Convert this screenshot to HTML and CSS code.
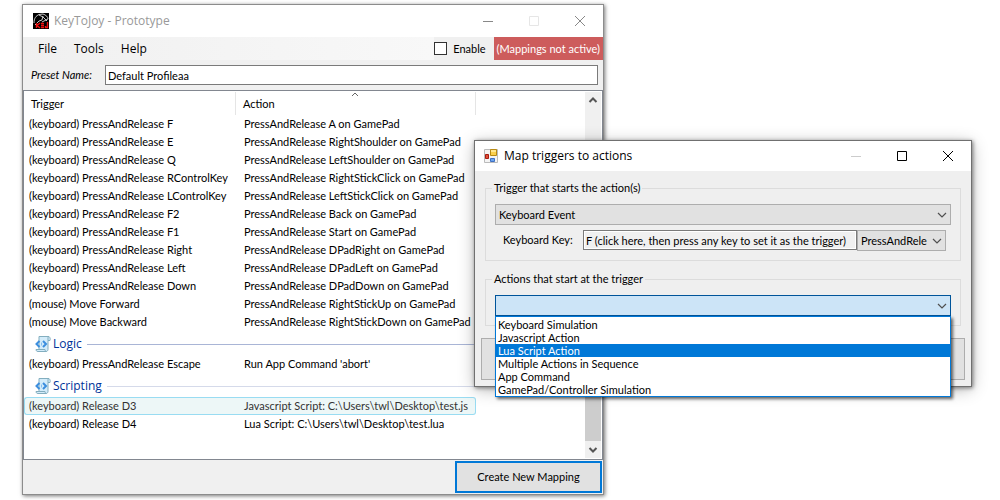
FILE: index.html
```html
<!DOCTYPE html>
<html lang="en">
<head>
<meta charset="utf-8">
<title>KeyToJoy - Prototype</title>
<link rel="stylesheet" href="styles.css">
</head>
<body>
<svg class="defs" width="0" height="0" aria-hidden="true">
  <symbol id="script" viewBox="0 0 16 16">
    <path d="M4 .5h10c1.200 1 1.500 2.500 1 4h-2v9c0 1-.8 2-2 2H3c-1.500 0-2-1-2-2h3z" fill="#d3ecfa" stroke="#83aebf"/>
    <path d="M13 4.500V2c0-1 .5-1.500 1-1.500M2 13.500h8c0 1 .5 2 1.500 2" fill="none" stroke="#83aebf"/>
    <path d="M4.500 5 1.500 8l3 3M8 5l3 3-3 3" fill="none" stroke="#3c8ede" stroke-width="2"/>
    <path d="M6 6.500h1v3H6z" fill="#83bdf0"/>
  </symbol>
  <symbol id="chevron" viewBox="0 0 10 6"><path d="m1 1 4 4 4-4" fill="none" stroke="#505050" stroke-width="1.200"/></symbol>
</svg>

<main class="window main-window">
  <header class="titlebar">
    <svg class="app-icon" viewBox="0 0 16 16" aria-hidden="true">
      <path d="M0 0h16v16H0z" fill="#000"/>
      <path d="M1 10c0-5 2-7 5-8.500l4-.5c3 1 5 3 5 5L9 9M2 12l4-4 3-1 1-4M6 2l4 2 4 4" fill="none" stroke="#ddd" stroke-width=".9"/>
      <path d="M3.500 10v5M7 10l-3 2.500L7 15M8 10.500h3M8 12.500h3M8 14.500h3M14.500 9v5.500h-2V13" fill="none" stroke="#f01010" stroke-width="1.400"/>
    </svg>
    <span class="title muted">KeyToJoy - Prototype</span>
    <div class="captions">
      <button aria-label="Minimize"><svg viewBox="0 0 12 12"><path d="M1 6.500h10" stroke="#888"/></svg></button>
      <button aria-label="Maximize"><svg viewBox="0 0 12 12"><path d="M1.500 1.500h9v9h-9z" fill="none" stroke="#e6e6e6"/></svg></button>
      <button aria-label="Close"><svg viewBox="0 0 12 12"><path d="m1 1 10 10M11 1 1 11" stroke="#888"/></svg></button>
    </div>
  </header>
  <div class="menubar">
    <nav class="menus"><button>File</button><button>Tools</button><button>Help</button></nav>
    <label class="enable"><input type="checkbox"> Enable</label>
    <span class="status">(Mappings not active)</span>
  </div>
  <div class="preset">
    <label for="preset">Preset Name:</label>
    <input id="preset" type="text" value="Default Profileaa">
  </div>
  <section class="list">
    <table class="mappings">
      <colgroup><col class="col-trigger"><col class="col-action"></colgroup>
      <thead><tr><th>Trigger</th><th>Action<svg class="sort" viewBox="0 0 8 5" aria-hidden="true"><path d="m1 4 3-3 3 3" fill="none" stroke="#666"/></svg></th></tr></thead>
      <tbody>
        <tr><td>(keyboard) PressAndRelease F</td><td>PressAndRelease A on GamePad</td></tr>
        <tr><td>(keyboard) PressAndRelease E</td><td>PressAndRelease RightShoulder on GamePad</td></tr>
        <tr><td>(keyboard) PressAndRelease Q</td><td>PressAndRelease LeftShoulder on GamePad</td></tr>
        <tr><td>(keyboard) PressAndRelease RControlKey</td><td>PressAndRelease RightStickClick on GamePad</td></tr>
        <tr><td>(keyboard) PressAndRelease LControlKey</td><td>PressAndRelease LeftStickClick on GamePad</td></tr>
        <tr><td>(keyboard) PressAndRelease F2</td><td>PressAndRelease Back on GamePad</td></tr>
        <tr><td>(keyboard) PressAndRelease F1</td><td>PressAndRelease Start on GamePad</td></tr>
        <tr><td>(keyboard) PressAndRelease Right</td><td>PressAndRelease DPadRight on GamePad</td></tr>
        <tr><td>(keyboard) PressAndRelease Left</td><td>PressAndRelease DPadLeft on GamePad</td></tr>
        <tr><td>(keyboard) PressAndRelease Down</td><td>PressAndRelease DPadDown on GamePad</td></tr>
        <tr><td>(mouse) Move Forward</td><td>PressAndRelease RightStickUp on GamePad</td></tr>
        <tr><td>(mouse) Move Backward</td><td>PressAndRelease RightStickDown on GamePad</td></tr>
        <tr class="group"><th colspan="2"><div class="group-head strong"><svg><use href="#script"/></svg>Logic</div></th></tr>
        <tr><td>(keyboard) PressAndRelease Escape</td><td>Run App Command 'abort'</td></tr>
        <tr class="group"><th colspan="2"><div class="group-head"><svg><use href="#script"/></svg>Scripting</div></th></tr>
        <tr class="selected"><td>(keyboard) Release D3</td><td>Javascript Script: C:\Users\twl\Desktop\test.js</td></tr>
        <tr><td>(keyboard) Release D4</td><td>Lua Script: C:\Users\twl\Desktop\test.lua</td></tr>
      </tbody>
    </table>
    <div class="scrollbar" aria-hidden="true">
      <svg viewBox="0 0 10 8"><path d="m1.500 6 3.500-3.500L8.500 6" fill="none" stroke="#555" stroke-width="2"/></svg>
      <div class="thumb"></div>
      <svg viewBox="0 0 10 8"><path d="M1.500 2 5 5.500 8.500 2" fill="none" stroke="#555" stroke-width="2"/></svg>
    </div>
  </section>
  <footer class="footer"><button class="create">Create New Mapping</button></footer>
</main>

<section class="window dialog" role="dialog" aria-label="Map triggers to actions">
  <header class="titlebar">
    <svg class="form-icon" viewBox="0 0 14 14" aria-hidden="true">
      <path d="M.5.5h13v13H.5z" fill="#f4f4f4" stroke="#bbb"/>
      <path d="M6.500.5h6v6h-6z" fill="#fbd04c" stroke="#b88a13"/>
      <path d="M7 1h5v2H7z" fill="#ffe791"/>
      <path d="M1.500 5.500h3v4h-3z" fill="#e0503a" stroke="#a81c10"/>
      <path d="M6.500 9.500h4v3h-4z" fill="#6ba4ee" stroke="#3f71c4"/>
    </svg>
    <span class="title">Map triggers to actions</span>
    <div class="captions">
      <button aria-label="Minimize"><svg viewBox="0 0 12 12"><path d="M1 6.500h10" stroke="#ccc"/></svg></button>
      <button aria-label="Maximize"><svg viewBox="0 0 12 12"><path d="M1.500 1.500h9v9h-9z" fill="none" stroke="#000"/></svg></button>
      <button aria-label="Close"><svg viewBox="0 0 12 12"><path d="m1 1 10 10M11 1 1 11" stroke="#000"/></svg></button>
    </div>
  </header>
  <div class="dialog-body">
    <fieldset>
      <legend>Trigger that starts the action(s)</legend>
      <div class="combo"><select aria-label="Trigger"><option>Keyboard Event</option></select><svg><use href="#chevron"/></svg></div>
      <div class="key-row">
        <label for="key">Keyboard Key:</label>
        <input id="key" type="text" readonly value="F (click here, then press any key to set it as the trigger)">
        <div class="combo press"><select aria-label="Press type"><option>PressAndRelease</option></select><svg><use href="#chevron"/></svg></div>
      </div>
    </fieldset>
    <fieldset>
      <legend>Actions that start at the trigger</legend>
      <div class="combo open"><select aria-label="Action"><option></option></select><svg><use href="#chevron"/></svg>
        <ul class="popup" role="listbox">
          <li role="option">Keyboard Simulation</li>
          <li role="option">Javascript Action</li>
          <li role="option" class="active" aria-selected="true">Lua Script Action</li>
          <li role="option">Multiple Actions in Sequence</li>
          <li role="option">App Command</li>
          <li role="option">GamePad/Controller Simulation</li>
        </ul>
      </div>
    </fieldset>
    <button class="save" aria-label="Save"></button>
  </div>
</section>
</body>
</html>
```
FILE: styles.css
```css
* { box-sizing: border-box; }
body { margin: 0; min-height: 100vh; background: #fff; color: #000; font: 11px/14px Lato, "Liberation Sans", sans-serif; overflow: hidden; }
button, input, select { font: inherit; color: inherit; margin: 0; padding: 0; border: 0; border-radius: 0; background: none; }
svg { display: block; flex: none; }
.defs { position: absolute; }

.window { position: absolute; background: #f0f0f0; }
.main-window { left: 23px; top: 5px; width: 58vw; box-shadow: 0 0 0 1px #8c8c8c, 1px 1px 4px 1px #777; }
.dialog { left: 475px; top: 141px; width: 49.6vw; background: #efefef; box-shadow: 0 0 0 1px #707070, 1px 1px 4px 1px #777, 0 3px 16px rgba(0, 0, 0, .3); }

.titlebar { display: flex; align-items: center; height: 32px; padding-left: 10px; background: #fff; }
.dialog .titlebar { height: 30px; padding-left: 9px; }
.app-icon { width: 16px; height: 16px; }
.form-icon { width: 14px; height: 14px; }
.title { flex: 1; padding-left: 5px; font: 12px/16px "Open Sans", sans-serif; }
.dialog .title { padding-left: 6px; }
.muted { color: #999; }
.captions { display: flex; }
.captions button { display: grid; place-items: center; width: 46px; height: 30px; }
.captions svg { width: 12px; height: 12px; }

.menubar { display: flex; height: 23px; }
.menus { flex: 1; display: flex; gap: 17px; padding-left: 15px; background: linear-gradient(90deg, #f0f0f0, #f8f8f8); font: 12px/23px "Open Sans", sans-serif; }
.enable { display: flex; align-items: center; gap: 6px; padding-right: 8px; }
.enable input { appearance: none; width: 13px; height: 13px; border: 1px solid #333; background: #fff; }
.status { min-width: 109px; padding: 0 3px; background: #cd5c5c; color: #fff; line-height: 24px; }

.preset { display: flex; align-items: center; height: 30px; padding: 0 5px 0 8px; }
.preset label { width: 74px; font-style: italic; }
.preset input { flex: 1; height: 20px; padding: 0 2px; border: 1px solid #7a7a7a; background: #fff; }

.list { display: flex; justify-content: space-between; height: 370px; padding: 1px 1px 1px 0; border: 1px solid #828790; background: #fff; }
.mappings { align-self: flex-start; width: 452px; table-layout: fixed; border-collapse: separate; border-spacing: 0; white-space: nowrap; }
.col-trigger { width: 212px; }
.mappings th { font-weight: normal; text-align: left; padding: 0; }
.mappings thead th { position: relative; height: 23px; padding: 0 0 0 7px; border-right: 1px solid #e5e5e5; }
.sort { position: absolute; top: 0; left: 48%; width: 8px; height: 5px; }
.mappings td { height: 18px; padding: 0 0 0 5px; line-height: 16px; }
.mappings td + td { padding-left: 8px; }
.group-head { display: flex; align-items: center; height: 24px; padding: 2px 0 0 11px; gap: 2px; color: #039; font: 12px/16px "Open Sans", sans-serif; }
.group-head svg { width: 16px; height: 16px; }
.group-head::after { content: ""; flex: 1; height: 1px; margin-left: 3px; background: #d5daea; }
.group-head.strong::after { background: #a9b5d6; }
.selected td { padding-left: 4px; border: 1px solid #99dcf2; border-right: 0; border-radius: 3px 0 0 3px; background: #edf7f7; color: #333; }
.selected td + td { border: 1px solid #99dcf2; border-left: 0; border-radius: 0 3px 3px 0; }

.scrollbar { display: flex; flex-direction: column; align-items: center; gap: 4px; width: 16px; padding: 4px 0; background: #f0f0f0; }
.scrollbar svg { width: 10px; height: 8px; }
.thumb { flex: 1; align-self: stretch; margin: 60px 0 1px; background: #cdcdcd; }
.footer { display: flex; justify-content: flex-end; padding: 1px; }
.create { width: 147px; height: 32px; border: 2px solid #0078d7; background: #e1e1e1; }

.dialog-body { display: flex; flex-direction: column; padding: 10px 6px 6px; }
fieldset { min-width: 0; margin: 0 4px 11px; padding: 9px; border: 1px solid #dcdcdc; }
legend { padding: 0 2px; margin-left: -3px; }
.combo { position: relative; }
.combo select { display: block; appearance: none; width: 100%; height: 21px; padding: 0 24px 0 3px; border: 1px solid #adadad; background: #e1e1e1; }
.combo > svg { position: absolute; right: 4px; top: 8px; width: 10px; height: 6px; pointer-events: none; }
.combo.open select { border-color: #00549a; background: #cce4f7; }
.key-row { display: flex; padding: 5px 5px 0 8px; }
.key-row label { width: 80px; line-height: 19px; }
.key-row input { flex: 1; min-width: 0; height: 20px; padding: 0 2px; border: 1px solid #7a7a7a; box-shadow: inset 0 0 0 1px #fff; background: #f0f0f0; }
.press { width: 89px; }
.press select { padding-right: 18px; }
.popup { position: absolute; z-index: 1; top: 100%; left: 0; right: 0; margin: 0; padding: 1px 0 0; border: 1px solid #0078d7; background: #fff; list-style: none; line-height: 13px; box-shadow: 2px 2px 3px rgba(0, 0, 0, .6); }
.popup li { padding-left: 2px; }
.popup .active { background: #0078d7; color: #fff; }
.save { height: 42px; margin-top: 1px; border: 1px solid #adadad; background: #e1e1e1; }
```
